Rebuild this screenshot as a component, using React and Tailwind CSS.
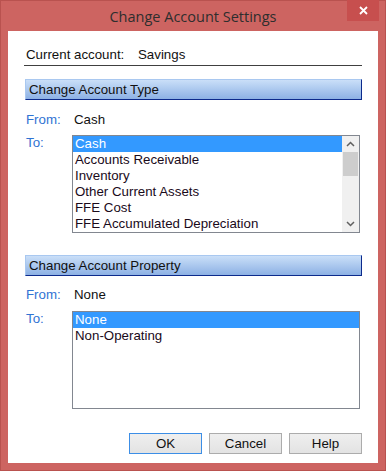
import React, { useState } from 'react';

const typeOptions = [
    'Cash',
    'Accounts Receivable',
    'Inventory',
    'Other Current Assets',
    'FFE Cost',
    'FFE Accumulated Depreciation',
];

const propertyOptions = ['None', 'Non-Operating'];

const SectionHeader = ({ title }) => (
    <div className="ml-px h-[21px] flex items-center pl-[3px] border border-t-[#a9c8f0] border-l-[#a9c8f0] border-r-[#0c2a8c] border-b-[#0c2a8c] bg-gradient-to-b from-[#cadff8] to-[#8db1e4] text-[#111]">
        {title}
    </div>
);

const ListBox = ({ items, selected, onSelect, scroll }) => (
    <div className="flex-1 h-[98px] border border-[#828790] bg-white flex">
        <div className="flex-1 pt-0">
            {items.map((item) => (
                <div
                    key={item}
                    onClick={() => onSelect(item)}
                    className={`h-4 leading-4 pl-[2px] ${selected === item ? 'bg-[#3399ff] text-white' : 'text-[#1a0a1a]'}`}
                >
                    {item}
                </div>
            ))}
        </div>
        {scroll && (
            <div className="w-[17px] bg-[#f0f0f0] flex flex-col">
                <div className="h-4 flex items-center justify-center">
                    <svg width="9" height="6" viewBox="0 0 9 6">
                        <path d="M1 5 L4.5 1.5 L8 5" fill="none" stroke="#606060" strokeWidth="1.5" />
                    </svg>
                </div>
                <div className="h-[24px] mx-px bg-[#cdcdcd]" />
                <div className="flex-1" />
                <div className="h-4 flex items-center justify-center">
                    <svg width="9" height="6" viewBox="0 0 9 6">
                        <path d="M1 1 L4.5 4.5 L8 1" fill="none" stroke="#606060" strokeWidth="1.5" />
                    </svg>
                </div>
            </div>
        )}
    </div>
);

export default function App() {
    const [accountType, setAccountType] = useState('Cash');
    const [property, setProperty] = useState('None');

    return (
        <div
            className="w-[386px] h-[471px] bg-[#cd6461] border border-[#b9524f] flex flex-col text-[13.3px] leading-4"
            style={{ fontFamily: '"Liberation Sans", Arial, sans-serif' }}
        >
            {/* Title bar */}
            <div className="h-[30px] relative flex items-center justify-center">
                <span className="text-[14.5px] text-[#2e2e2e] mt-[1px]" style={{ fontFamily: '"Open Sans", sans-serif' }}>
                    Change Account Settings
                </span>
                <div className="absolute top-[-1px] right-[6px] w-[32px] h-[21px] bg-[#c74f4e] flex items-center justify-center">
                    <svg width="9" height="9" viewBox="0 0 9 9">
                        <path d="M1 1 L8 8 M8 1 L1 8" stroke="white" strokeWidth="1.8" />
                    </svg>
                </div>
            </div>

            {/* Body */}
            <div className="mx-[7px] h-[432px] bg-white px-4 flex flex-col">
                <div className="mt-4 pb-[2px] border-b border-[#404040] flex h-[19px]">
                    <span className="pl-[2px] w-[114px] text-[#111]">Current account:</span>
                    <span className="text-[#111]">Savings</span>
                </div>

                <div className="mt-[13px]">
                    <SectionHeader title="Change Account Type" />
                </div>

                <div className="mt-3 flex">
                    <span className="pl-[2px] w-[50px] text-[#2f73d3]">From:</span>
                    <span className="text-[#111]">Cash</span>
                </div>

                <div className="mt-[7px] flex">
                    <span className="pl-[2px] w-[48px] text-[#2f73d3]">To:</span>
                    <ListBox items={typeOptions} selected={accountType} onSelect={setAccountType} scroll />
                    <div className="w-[2px]" />
                </div>

                <div className="mt-[22px]">
                    <SectionHeader title="Change Account Property" />
                </div>

                <div className="mt-[11px] flex">
                    <span className="pl-[2px] w-[50px] text-[#2f73d3]">From:</span>
                    <span className="text-[#111]">None</span>
                </div>

                <div className="mt-2 flex">
                    <span className="pl-[2px] w-[48px] text-[#2f73d3]">To:</span>
                    <ListBox items={propertyOptions} selected={property} onSelect={setProperty} />
                    <div className="w-[2px]" />
                </div>

                <div className="mt-6 flex justify-end gap-[7px]">
                    {['OK', 'Cancel', 'Help'].map((label) => (
                        <button
                            key={label}
                            className={`w-[73px] h-[21px] border bg-gradient-to-b from-[#efefef] to-[#e3e3e3] text-[#111] leading-none ${
                                label === 'OK' ? 'border-[#3c8ee6]' : 'border-[#acacac]'
                            }`}
                        >
                            {label}
                        </button>
                    ))}
                </div>
            </div>
        </div>
    );
}
